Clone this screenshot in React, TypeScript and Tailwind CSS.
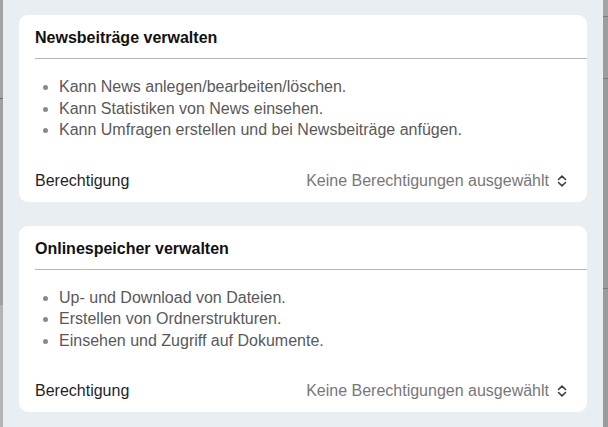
import { ReactNode } from "react";

const permissionGroups = [
  {
    title: "Newsbeiträge verwalten",
    items: [
      "Kann News anlegen/bearbeiten/löschen.",
      "Kann Statistiken von News einsehen.",
      "Kann Umfragen erstellen und bei Newsbeiträge anfügen.",
    ],
  },
  {
    title: "Onlinespeicher verwalten",
    items: [
      "Up- und Download von Dateien.",
      "Erstellen von Ordnerstrukturen.",
      "Einsehen und Zugriff auf Dokumente.",
    ],
  },
];

const UpDownIcon = () => (
  <svg width="10" height="12" viewBox="0 0 10 12" fill="none" className="shrink-0">
    <path d="M1.5 4.5 5 1.2l3.5 3.3" stroke="#3f3f3f" strokeWidth="1.6" strokeLinecap="round" strokeLinejoin="round" />
    <path d="M1.5 7.5 5 10.8l3.5-3.3" stroke="#3f3f3f" strokeWidth="1.6" strokeLinecap="round" strokeLinejoin="round" />
  </svg>
);

const PermissionCard = ({ title, items }: { title: string; items: string[] }) => (
  <div className="bg-white rounded-[9px] pl-4 pt-[13px] pb-[11px]">
    <div className="border-b border-[#b8b8b8] pb-[10px]">
      <h2 className="text-[16px] leading-5 font-bold text-[#111]">{title}</h2>
    </div>
    <ul className="list-disc pl-6 mt-[17px] text-[16px] leading-[21.5px] text-[#595959] marker:text-[#8a8a8a]">
      {items.map((item) => (
        <li key={item}>{item}</li>
      ))}
    </ul>
    <div className="mt-[30px] pr-[20px] flex items-center justify-between text-[16px] leading-5">
      <span className="text-[#1f1f1f]">Berechtigung</span>
      <button className="flex items-center gap-[8px] text-[#777]">
        Keine Berechtigungen ausgewählt
        <UpDownIcon />
      </button>
    </div>
  </div>
);

const Strip = ({ children, width }: { children?: ReactNode; width: string }) => (
  <div className={`${width} shrink-0 bg-[#9b9b9b] flex flex-col`}>{children}</div>
);

export default function App() {
  return (
    <div
      className="w-[608px] h-[427px] overflow-hidden flex"
      style={{ fontFamily: '"Liberation Sans", Arial, sans-serif' }}
    >
      <Strip width="w-[3px]">
        <div className="h-[98px] bg-[#a3a3a3]" />
        <div className="h-px bg-[#6e6e6e]" />
        <div className="h-[206px] bg-[#a0a0a0]" />
        <div className="flex-1 bg-[#b4b4b4]" />
      </Strip>
      <div className="flex-1 bg-[#e9eef2] px-4 pt-[15px] flex flex-col gap-6">
        {permissionGroups.map((group) => (
          <PermissionCard key={group.title} title={group.title} items={group.items} />
        ))}
      </div>
      <Strip width="w-[5px]">
        <div className="h-4 bg-[#a4a4a4]" />
        <div className="h-px bg-[#7a7a7a]" />
        <div className="h-[61px] bg-[#9d9d9d]" />
        <div className="h-px bg-[#7a7a7a]" />
        <div className="h-[209px] bg-[#9a9a9a]" />
        <div className="h-px bg-[#7a7a7a]" />
        <div className="flex-1 bg-[#9b9b9b]" />
      </Strip>
    </div>
  );
}
